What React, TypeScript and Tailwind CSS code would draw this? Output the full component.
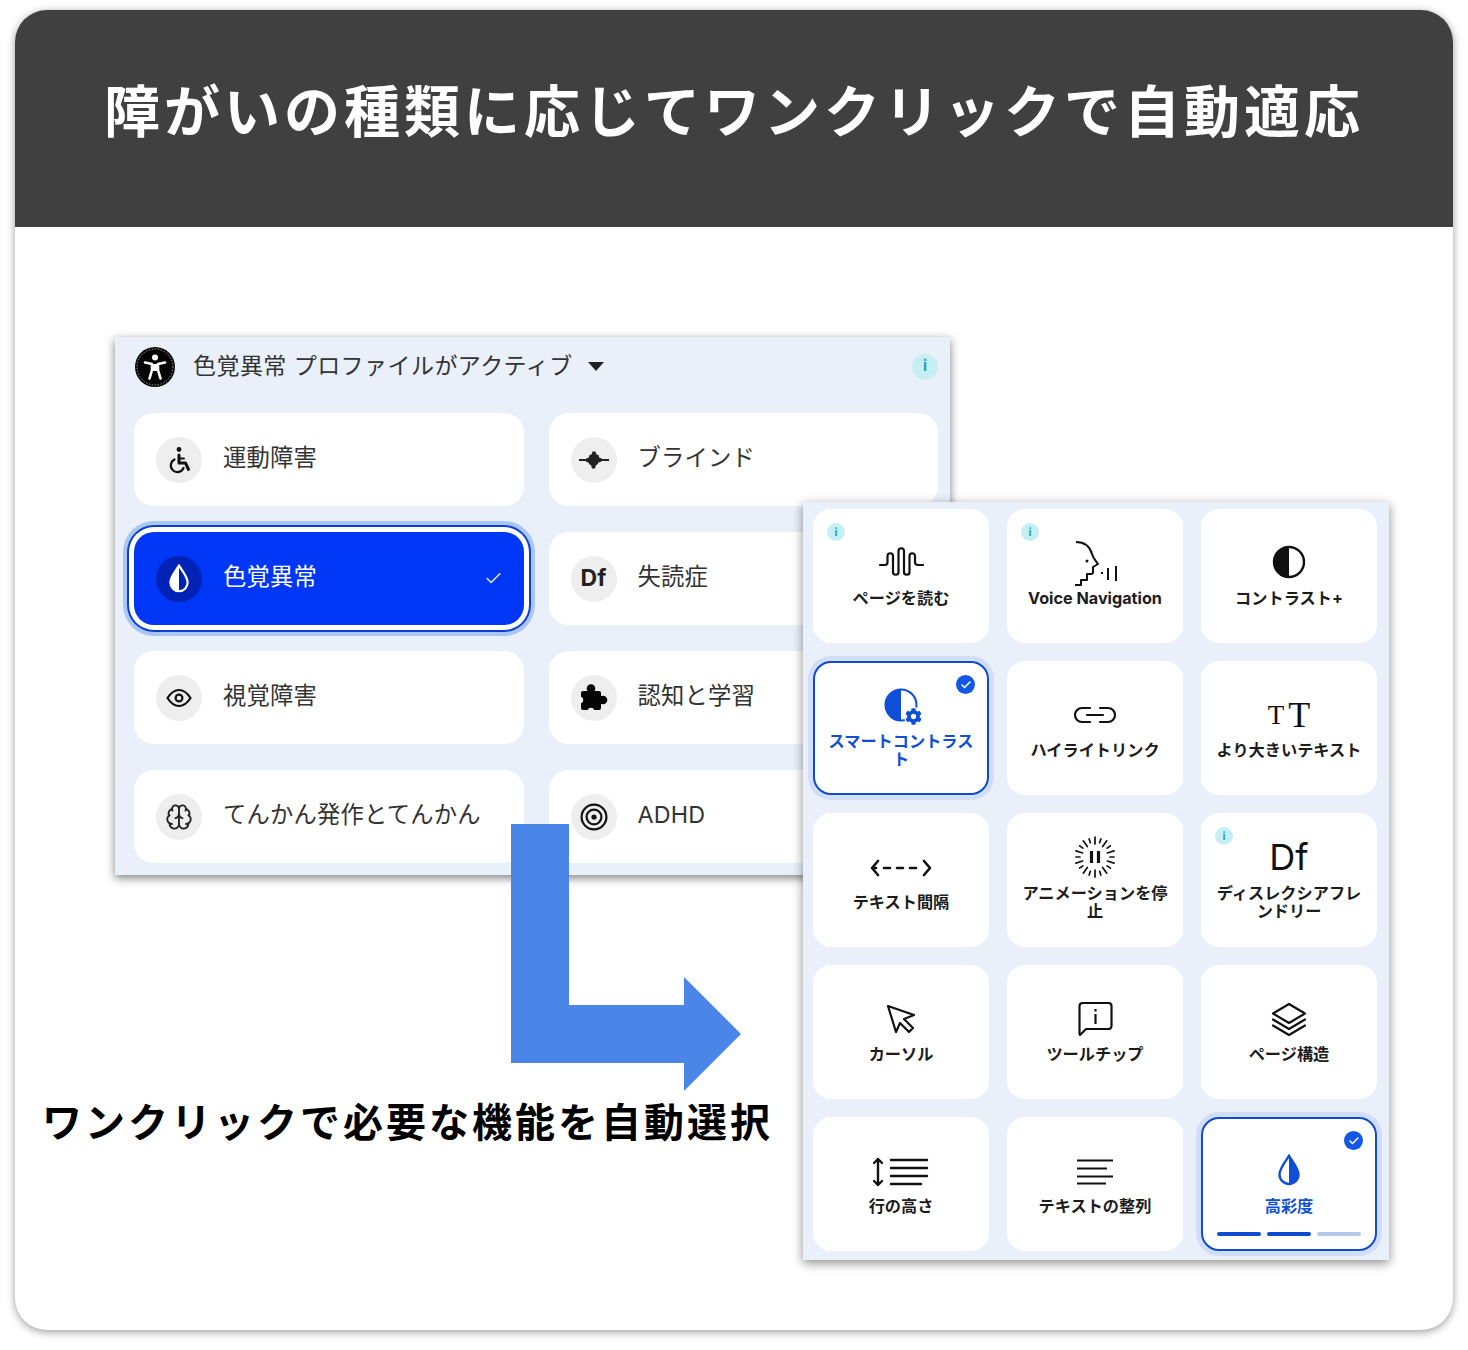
import { ReactNode } from "react";
import { Brain, Check } from "lucide-react";
import { FaCog } from "react-icons/fa";

const Drop = ({ w, h, line, left, right }: { w: number; h: number; line: string; left: string; right: string }) => (
    <svg width={w} height={h} viewBox="0 0 22 32">
        <path d="M11 1.8V30a9.5 9.5 0 0 1-9.5-9.5C1.5 14 8 7 11 1.8Z" fill={left} />
        <path d="M11 1.8V30a9.5 9.5 0 0 0 9.5-9.5C20.5 14 14 7 11 1.8Z" fill={right} />
        <path d="M11 1.8C14 7 20.5 14 20.5 20.5a9.5 9.5 0 0 1-19 0C1.5 14 8 7 11 1.8Z" fill="none" stroke={line} strokeWidth="2.4" />
    </svg>
);

const InfoDot = ({ big }: { big?: boolean }) => (
    <span className={`flex items-center justify-center rounded-full bg-[#c6eff3] font-bold text-[#1ba3b4] ${big ? "h-[26px] w-[26px] text-[15px]" : "h-[18px] w-[18px] text-[11px]"}`}>
        i
    </span>
);

const AccessIcon = () => (
    <svg width="42" height="42" viewBox="0 0 42 42">
        <circle cx="21" cy="21" r="20" fill="#050505" />
        <circle cx="21" cy="21" r="18" fill="none" stroke="#fff" strokeWidth="0.6" strokeDasharray="1.5 1.5" />
        <circle cx="21" cy="11.5" r="3" fill="#fff" />
        <path d="M11 16.5 18 18v6l-2.5 8.5M31 16.5 24 18v6l2.5 8.5" fill="none" stroke="#fff" strokeWidth="2.6" strokeLinecap="round" strokeLinejoin="round" />
        <path d="M18 18h6v7h-6Z" fill="#fff" />
    </svg>
);

const WheelchairIcon = () => (
    <svg width="26" height="28" viewBox="0 0 26 28" fill="none" stroke="#111" strokeLinecap="round" strokeLinejoin="round">
        <circle cx="13" cy="3.5" r="2.4" fill="#111" stroke="none" />
        <path d="M13 9v8h6.5l3 6.5" strokeWidth="3" />
        <path d="M13 12.5h5" strokeWidth="2" />
        <path d="M8.5 13.5a6.6 6.6 0 1 0 9 8.5" strokeWidth="2.2" />
    </svg>
);

const BlindIcon = () => (
    <svg width="30" height="20" viewBox="0 0 30 20">
        <path d="M0.5 10h7M22.5 10h7" stroke="#222" strokeWidth="2" strokeLinecap="round" />
        <path d="M6 10 8 8h1.500l1-3 2-.5L13.500 1.500h3L17.500 4.500l2 .5 1 3H22l2 2-2.500 2-2 .5-1 2-1.500.5-1 3.500h-3l-1-3.500-1.500-.5-1-2-2-.5Z" fill="#222" />
    </svg>
);

const EyeIcon = () => (
    <svg width="26" height="20" viewBox="0 0 26 20" fill="none" stroke="#111" strokeWidth="2.2">
        <path d="M1.500 10C5 4.500 9 2 13 2s8 2.500 11.500 8C21 15.500 17 18 13 18S5 15.500 1.500 10Z" />
        <circle cx="13" cy="10" r="3.400" />
    </svg>
);

const PuzzleIcon = () => (
    <svg width="29" height="29" viewBox="0 0 29 29">
        <rect x="2" y="8" width="20" height="19" rx="2" fill="#050505" />
        <circle cx="12" cy="5.500" r="4.300" fill="#050505" />
        <circle cx="24" cy="17" r="4.300" fill="#050505" />
        <circle cx="12" cy="28" r="3.200" fill="#eeeeee" />
        <circle cx="1" cy="17" r="3.200" fill="#eeeeee" />
    </svg>
);

const TargetIcon = () => (
    <svg width="28" height="28" viewBox="0 0 28 28" fill="none" stroke="#111" strokeWidth="2.2">
        <circle cx="14" cy="14" r="12.400" />
        <circle cx="14" cy="14" r="7.400" />
        <circle cx="14" cy="14" r="2.600" fill="#111" stroke="none" />
    </svg>
);

const options: { label: string; icon: ReactNode; active?: boolean }[] = [
    { label: "運動障害", icon: <WheelchairIcon /> },
    { label: "ブラインド", icon: <BlindIcon /> },
    { label: "色覚異常", icon: <Drop w={20} h={29} line="#fff" left="#fff" right="#0022b5" />, active: true },
    { label: "失読症", icon: <span className="text-[23px] font-bold text-[#222]">Df</span> },
    { label: "視覚障害", icon: <EyeIcon /> },
    { label: "認知と学習", icon: <PuzzleIcon /> },
    { label: "てんかん発作とてんかん", icon: <Brain size={28} color="#222" strokeWidth={1.6} /> },
    { label: "ADHD", icon: <TargetIcon /> },
];

const stroke = { fill: "none", stroke: "#111", strokeWidth: 2.2, strokeLinecap: "round", strokeLinejoin: "round" } as const;

const WaveIcon = () => (
    <svg width="45" height="29" viewBox="0 0 45 29" {...stroke}>
        <path d="M1 18H6Q8.500 18 8.500 15V9a2.750 2.750 0 0 1 5.500 0V25a2.750 2.750 0 0 0 5.500 0V4a2.750 2.750 0 0 1 5.500 0V25a2.750 2.750 0 0 0 5.500 0V9a2.750 2.750 0 0 1 5.500 0V15Q36 18 39 18H44" />
    </svg>
);

const HeadIcon = () => (
    <svg width="44" height="46" viewBox="0 0 44 46" {...stroke} strokeWidth={2} className="mb-[-4px] ml-[2px]">
        <path d="M2 1C11 1 16 6 18 13c1 4 4 7 6 10l-5 3v5a2 2 0 0 1-2 2h-4v6H7v5H1" strokeLinecap="butt" />
        <circle cx="13" cy="20" r="1.500" fill="#111" stroke="none" />
        <path d="M28 31v2M34 27v12M42 25v15" strokeLinecap="butt" />
    </svg>
);

const ContrastIcon = () => (
    <svg width="34" height="34" viewBox="0 0 34 34">
        <circle cx="17" cy="17" r="15" fill="#fff" stroke="#111" strokeWidth="2.400" />
        <path d="M17 2a15 15 0 0 0 0 30Z" fill="#111" />
    </svg>
);

const SmartContrastIcon = () => (
    <div className="relative h-[34px] w-[35px]">
        <svg width="34" height="34" viewBox="0 0 34 34">
            <circle cx="17" cy="17" r="15.500" fill="#fff" stroke="#0f4fd8" strokeWidth="2" />
            <path d="M17 1.500a15.500 15.500 0 0 0 0 31Z" fill="#0f4fd8" />
        </svg>
        <span className="absolute right-[-4px] bottom-[-4px] rounded-full bg-white p-[1px]">
            <FaCog size={17} color="#0f4fd8" />
        </span>
    </div>
);

const LinkIcon = () => (
    <svg width="44" height="18" viewBox="0 0 44 18" {...stroke} className="mt-[2px]">
        <path d="M17 2H9a7 7 0 0 0 0 14h8M27 2h8a7 7 0 0 1 0 14h-8M14 9h16" />
    </svg>
);

const TextSizeIcon = () => (
    <div className="mt-[3px] flex items-center gap-[4px] font-['Liberation_Serif',serif] leading-none text-[#111]">
        <span className="text-[27px] leading-[24px]">T</span>
        <span className="text-[36px] leading-[26px]">T</span>
    </div>
);

const SpacingIcon = () => (
    <svg width="62" height="18" viewBox="0 0 62 18" {...stroke} strokeWidth={2.600} className="mt-[4px]">
        <path d="M8 2 2 9l6 7M54 2l6 7-6 7M2 9h4" />
        <path d="M14 9h6M27 9h6M40 9h6" />
    </svg>
);

const PauseRing = () => (
    <svg width="42" height="42" viewBox="0 0 42 42">
        {Array.from({ length: 20 }).map((_, i) => (
            <line key={i} x1="21" y1={i % 2 ? 2 : 1} x2="21" y2={i % 2 ? 6 : 8} stroke="#111" strokeWidth="1.700" strokeLinecap="round" transform={`rotate(${i * 18} 21 21)`} />
        ))}
        <path d="M17.500 15v12M24.500 15v12" stroke="#111" strokeWidth="3.200" />
    </svg>
);

const CursorIcon = () => (
    <svg width="30" height="30" viewBox="0 0 30 30" {...stroke} className="mt-[3px]">
        <path d="M2 2 28 11l-10 4 9 9-4 4-9-9-4 9Z" />
    </svg>
);

const TooltipIcon = () => (
    <svg width="35" height="36" viewBox="0 0 35 36" {...stroke} strokeLinecap="butt" className="mt-[3px]">
        <path d="M1.500 33V5a3 3 0 0 1 3-3h26a3 3 0 0 1 3 3v20a3 3 0 0 1-3 3H8l-6 6Z" />
        <path d="M17.500 13v10M17.500 8v2.400" />
    </svg>
);

const LayersIcon = () => (
    <svg width="36" height="34" viewBox="0 0 36 34" {...stroke} className="mt-[2px]">
        <path d="M18 2 34 11.500 18 21 2 11.500Z" />
        <path d="M2 17.500 18 27l16-9.500M2 23.500 18 33l16-9.500" />
    </svg>
);

const LineHeightIcon = () => (
    <svg width="56" height="30" viewBox="0 0 56 30" {...stroke} strokeWidth={2.400} className="mt-[5px]">
        <path d="M5 2v26M1 6l4-4 4 4M1 24l4 4 4-4" />
        <path d="M18 3h36M18 11h36M18 19h36M18 27h30" />
    </svg>
);

const AlignIcon = () => (
    <svg width="36" height="26" viewBox="0 0 36 26" {...stroke} strokeLinecap="butt" className="mt-[5px]">
        <path d="M0 1.500h36M0 9.500h30M0 17.500h36M0 24.500h29" />
    </svg>
);

type Tile = {
    label: string;
    icon: ReactNode;
    info?: boolean;
    selected?: boolean;
    bars?: boolean;
};

const tiles: Tile[] = [
    { label: "ページを読む", icon: <WaveIcon />, info: true },
    { label: "Voice Navigation", icon: <HeadIcon />, info: true },
    { label: "コントラスト+", icon: <ContrastIcon /> },
    { label: "スマートコントラスト", icon: <SmartContrastIcon />, selected: true },
    { label: "ハイライトリンク", icon: <LinkIcon /> },
    { label: "より大きいテキスト", icon: <TextSizeIcon /> },
    { label: "テキスト間隔", icon: <SpacingIcon /> },
    { label: "アニメーションを停止", icon: <PauseRing /> },
    { label: "ディスレクシアフレンドリー", icon: <span className="text-[36px] leading-none text-[#111]">Df</span>, info: true },
    { label: "カーソル", icon: <CursorIcon /> },
    { label: "ツールチップ", icon: <TooltipIcon /> },
    { label: "ページ構造", icon: <LayersIcon /> },
    { label: "行の高さ", icon: <LineHeightIcon /> },
    { label: "テキストの整列", icon: <AlignIcon /> },
    { label: "高彩度", icon: <Drop w={22} h={32} line="#0f4fd8" left="#fff" right="#0f4fd8" />, selected: true, bars: true },
];

function OptionCard({ label, icon, active }: { label: string; icon: ReactNode; active?: boolean }) {
    return (
        <div className={`relative flex h-[93px] items-center gap-[21px] rounded-[20px] pl-[22px] ${active ? "bg-[#0036f5] text-white shadow-[0_0_0_5px_#fff,0_0_0_7px_#0b3fd2,0_0_0_11px_#a9c6f6]" : "bg-white text-[#333]"}`}>
            <span className={`flex h-[46px] w-[46px] shrink-0 items-center justify-center rounded-full ${active ? "bg-[#0022b5]" : "bg-[#eeeeee]"}`}>
                {icon}
            </span>
            <span className="pb-[3px] text-[23.300px] leading-none tracking-[0.2px]">{label}</span>
            {active && <Check size={19} strokeWidth={2} className="absolute right-[21px] text-[#dfe8ff]" />}
        </div>
    );
}

function FeatureTile({ label, icon, info, selected, bars }: Tile) {
    return (
        <div className={`relative flex h-[134px] flex-col items-center justify-center rounded-[18px] bg-white pb-[5px] ${selected ? "border-2 border-[#0f4bd0] px-[12px] shadow-[0_0_0_5px_#d0defa]" : "px-[14px]"}`}>
            {info && (
                <span className="absolute top-[14px] left-[14px]">
                    <InfoDot />
                </span>
            )}
            {selected && (
                <span className="absolute top-[12px] right-[12px] flex h-[19px] w-[19px] items-center justify-center rounded-full bg-[#1257e6]">
                    <Check size={12} strokeWidth={3} color="#fff" />
                </span>
            )}
            <div className="flex h-[44px] items-center justify-center">{icon}</div>
            <div className={`mt-[5px] text-center text-[16.200px] leading-[18.500px] font-bold ${selected ? "text-[#0f4fd8]" : "text-[#1c1c1c]"}`}>
                {label}
            </div>
            {bars && (
                <div className="absolute right-[14px] bottom-[13px] left-[14px] flex gap-[6px]">
                    <span className="h-[4px] flex-1 rounded-full bg-[#0f4bd0]" />
                    <span className="h-[4px] flex-1 rounded-full bg-[#0f4bd0]" />
                    <span className="h-[4px] flex-1 rounded-full bg-[#b5c9ee]" />
                </div>
            )}
        </div>
    );
}

export default function App() {
    return (
        <div className="h-[1350px] w-[1468px] bg-white px-[15px] pt-[10px] font-['Inter','Noto_Sans_CJK_JP',sans-serif]">
            <div className="relative h-[1320px] overflow-hidden rounded-[32px] bg-white shadow-[0_2px_8px_rgba(0,0,0,0.4)]">
                <div className="flex h-[217px] items-center justify-center bg-[#404040] pb-[14px]">
                    <h1 className="text-[56px] leading-none font-bold tracking-[4px] text-white">
                        障がいの種類に応じてワンクリックで自動適応
                    </h1>
                </div>

                <div className="pt-[110px] pl-[100px]">
                    <div className="h-[538px] w-[835px] bg-[#e9f0fa] px-[19px] shadow-[0_3px_9px_rgba(0,0,0,0.5)]">
                        <div className="mr-[-7px] flex h-[76px] items-center pb-[17px]">
                            <AccessIcon />
                            <span className="ml-[17px] text-[23px] leading-none tracking-[0.45px] text-[#333]">色覚異常 プロファイルがアクティブ</span>
                            <span className="ml-[15px] h-0 w-0 border-x-[8px] border-t-[9px] border-x-transparent border-t-[#222]" />
                            <span className="ml-auto">
                                <InfoDot big />
                            </span>
                        </div>
                        <div className="grid w-[804px] grid-cols-2 gap-x-[25px] gap-y-[26px]">
                            {options.map((option) => (
                                <OptionCard key={option.label} {...option} />
                            ))}
                        </div>
                    </div>
                </div>

                {/* 右側のパネルは左のパネルに重なる */}
                <div className="absolute top-[492px] left-[788px] grid h-[758px] w-[586px] grid-cols-3 content-start gap-[18px] bg-[#e9f0fa] pt-[7px] pl-[10px] pr-[12px] shadow-[0_3px_10px_rgba(0,0,0,0.45)]">
                    {tiles.map((tile) => (
                        <FeatureTile key={tile.label} {...tile} />
                    ))}
                </div>

                <svg width="232" height="268" viewBox="0 0 232 268" className="absolute top-[814px] left-[496px]">
                    <path d="M0 0H58V181H173V153L230 210 173 267V239H0Z" fill="#4a86e8" />
                </svg>

                <div className="absolute top-[1090px] left-[27px] text-[40px] leading-[46px] font-bold tracking-[3px] whitespace-nowrap text-black">
                    ワンクリックで必要な機能を自動選択
                </div>
            </div>
        </div>
    );
}
